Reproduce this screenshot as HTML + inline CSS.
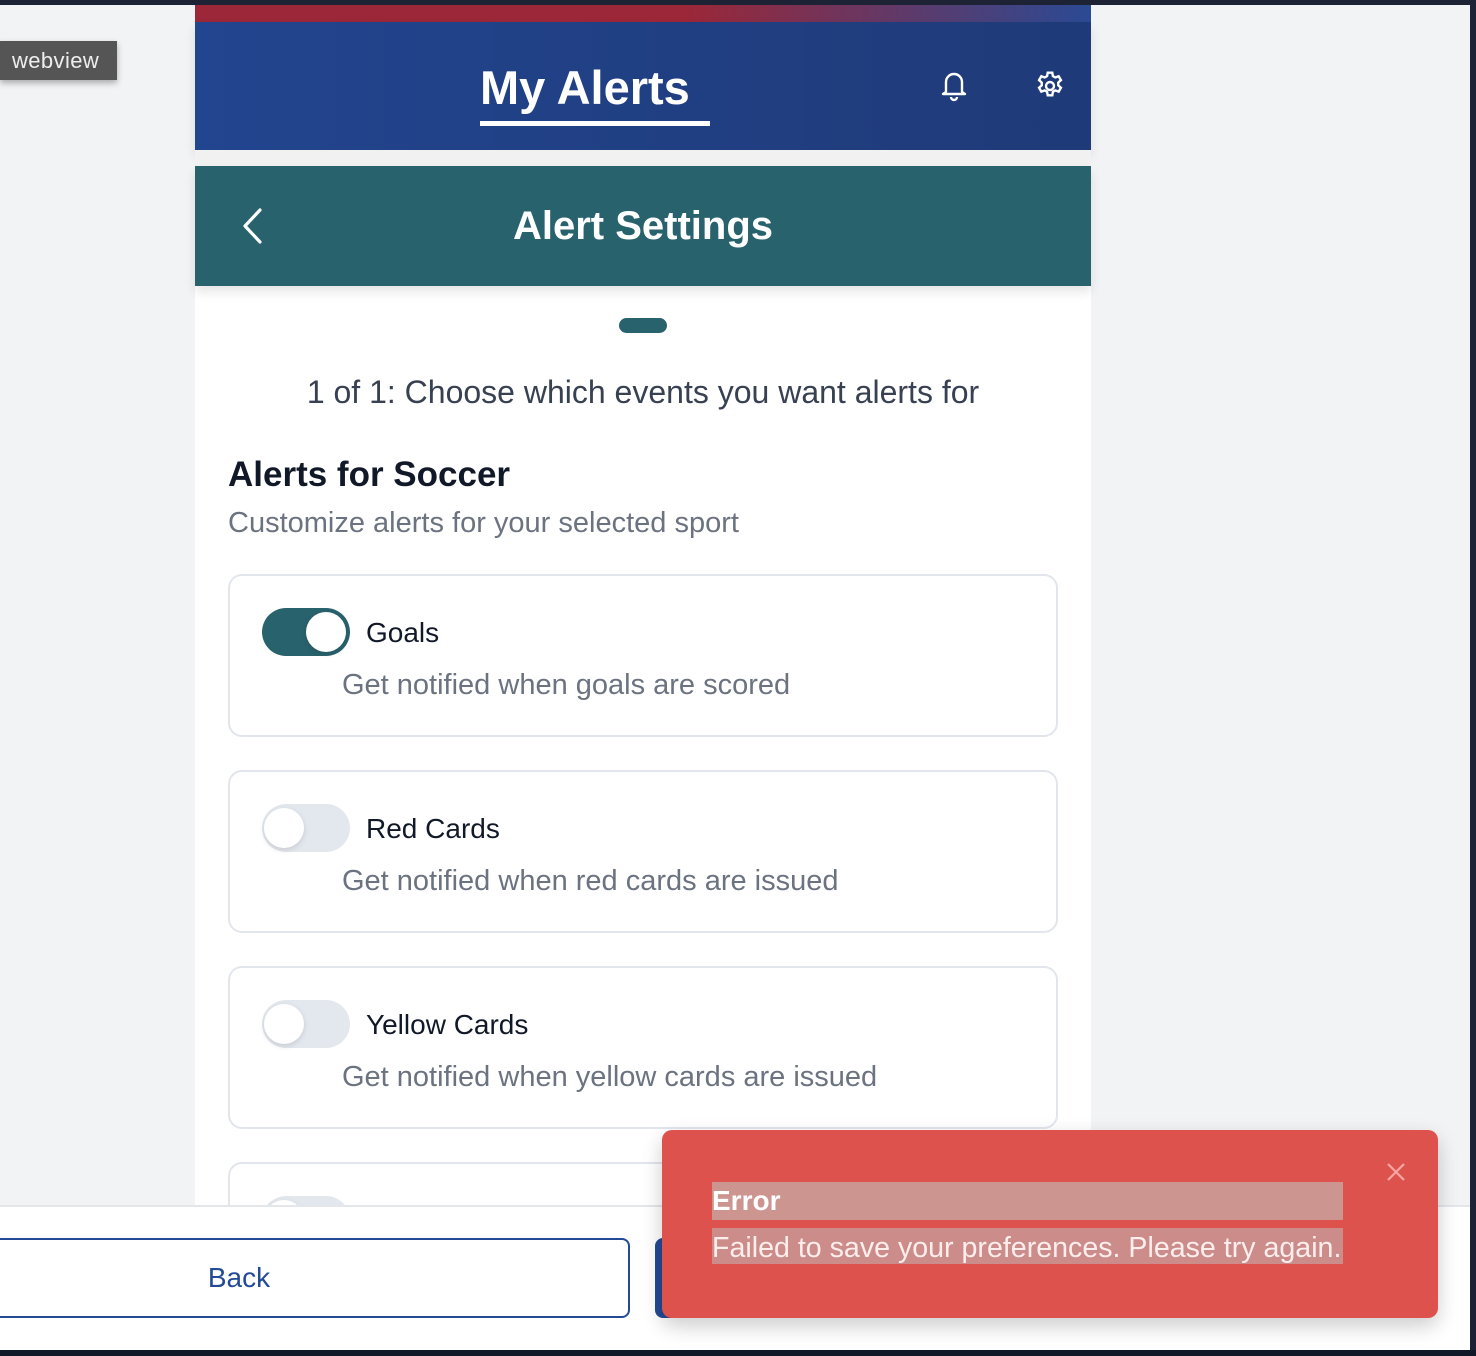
<!DOCTYPE html>
<html><head><meta charset="utf-8"><style>
*{box-sizing:border-box;margin:0;padding:0}
body{width:1476px;height:1356px;background:#f2f3f5;font-family:"Liberation Sans",sans-serif;position:relative;overflow:hidden}
.abs{position:absolute}
.card{position:absolute;left:228px;width:830px;height:163px;border:2px solid #e2e6ec;border-radius:14px;background:#fff}
.tog{position:absolute;left:32px;top:32px;width:88px;height:48px;border-radius:24px;background:#e3e7ee}
.tog .k{position:absolute;top:4px;left:2px;width:40px;height:40px;border-radius:50%;background:#fff;box-shadow:0 2px 6px rgba(0,0,0,.12)}
.tog.on{background:#28626d}.tog.on .k{left:44px}
.tt{position:absolute;left:136px;top:41px;font-size:28px;color:#111827}
.ds{position:absolute;left:112px;top:93px;font-size:29px;color:#6b7280}
</style></head><body>
<div class="abs" style="left:0;top:0;width:1476px;height:5px;background:#1e2235"></div>
<div class="abs" style="right:0;top:0;width:6px;height:1356px;background:#1e2235"></div>
<div class="abs" style="left:0;bottom:0;width:1476px;height:6px;background:#111827"></div>
<div class="abs" style="left:0;top:41px;width:117px;height:39px;background:#555;color:#eee;font-size:22px;line-height:39px;padding-left:12px;letter-spacing:0.4px;box-shadow:0 3px 6px rgba(0,0,0,.3)">webview</div>
<div class="abs" style="left:195px;top:5px;width:896px;height:1200px;background:#fff"></div>
<div class="abs" style="left:195px;top:5px;width:896px;height:17px;background:linear-gradient(90deg,#9b2738 0%,#9b2738 55%,#2b4a94 100%)"></div>
<div class="abs" style="left:195px;top:22px;width:896px;height:128px;background:linear-gradient(90deg,#22458f,#1f3a78);box-shadow:0 6px 10px rgba(0,0,0,.1)"></div>
<div class="abs" style="left:480px;top:60px;font-size:47px;font-weight:bold;color:#fff">My Alerts</div>
<div class="abs" style="left:480px;top:121px;width:230px;height:5px;background:#fff"></div>
<svg class="abs" style="left:938px;top:68px" width="32" height="34" viewBox="0 0 32 34" fill="none" stroke="#fff" stroke-width="2.4" stroke-linejoin="round"><path d="M8 24V14a8 8 0 0 1 16 0v10l3 2H5z"/><path d="M13 29a3 3 0 0 0 6 0"/></svg>
<svg class="abs" style="left:1034px;top:70px" width="32" height="32" viewBox="0 0 24 24" fill="none" stroke="#fff" stroke-width="1.8"><circle cx="12" cy="12" r="3"/><path d="M10.3 2h3.4l.5 2.6 1.8 1 2.5-.9 1.7 2.9-2 1.8v2.1l2 1.8-1.7 2.9-2.5-.9-1.8 1-.5 2.7h-3.4l-.5-2.7-1.8-1-2.5.9-1.7-2.9 2-1.8V9.4l-2-1.8 1.7-2.9 2.5.9 1.8-1z"/></svg>
<div class="abs" style="left:195px;top:150px;width:896px;height:16px;background:#f1f1f1"></div>
<div class="abs" style="left:195px;top:166px;width:896px;height:120px;background:#28626d;box-shadow:0 6px 10px rgba(0,0,0,.1)"></div>
<svg class="abs" style="left:238px;top:206px" width="28" height="40" viewBox="0 0 28 40" fill="none" stroke="#fff" stroke-width="3.2" stroke-linecap="round" stroke-linejoin="round"><path d="M22 4L7 20l15 16"/></svg>
<div class="abs" style="left:195px;width:896px;top:204px;text-align:center;font-size:40px;font-weight:bold;color:#fff">Alert Settings</div>
<div class="abs" style="left:619px;top:318px;width:48px;height:15px;border-radius:8px;background:#28626d"></div>
<div class="abs" style="left:195px;width:896px;top:374px;text-align:center;font-size:32px;color:#374151">1 of 1: Choose which events you want alerts for</div>
<div class="abs" style="left:228px;top:455px;font-size:35px;font-weight:bold;color:#111827">Alerts for Soccer</div>
<div class="abs" style="left:228px;top:507px;font-size:29px;color:#6b7280">Customize alerts for your selected sport</div>
<div class="card" style="top:574px"><div class="tog on"><div class="k"></div></div><div class="tt">Goals</div><div class="ds">Get notified when goals are scored</div></div>
<div class="card" style="top:770px"><div class="tog"><div class="k"></div></div><div class="tt">Red Cards</div><div class="ds">Get notified when red cards are issued</div></div>
<div class="card" style="top:966px"><div class="tog"><div class="k"></div></div><div class="tt">Yellow Cards</div><div class="ds">Get notified when yellow cards are issued</div></div>
<div class="card" style="top:1162px"><div class="tog"><div class="k"></div></div></div>
<div class="abs" style="left:0;top:1205px;width:1470px;height:145px;background:#fff;border-top:2px solid #e3e6eb"></div>
<div class="abs" style="left:-152px;top:1238px;width:782px;height:80px;border:2px solid #234a94;border-radius:8px;background:#fff;text-align:center;line-height:76px;font-size:28px;color:#234a94">Back</div>
<div class="abs" style="left:655px;top:1238px;width:200px;height:80px;border-radius:8px;background:#234a94"></div>
<div class="abs" style="left:662px;top:1130px;width:776px;height:188px;border-radius:10px;background:#dd524d;box-shadow:0 8px 20px rgba(0,0,0,.2)"></div>
<div class="abs" style="left:712px;top:1182px;width:631px;height:38px;background:#cc9590;color:#fff;font-size:28px;font-weight:bold;line-height:38px">Error</div>
<div class="abs" style="left:712px;top:1228px;width:631px;height:36px;background:#cc8d8a;color:#fdeeee;font-size:28.6px;line-height:40px;white-space:nowrap;overflow:hidden">Failed to save your preferences. Please try again.</div>
<svg class="abs" style="left:1386px;top:1162px" width="20" height="20" viewBox="0 0 20 20" stroke="#f6a6a3" stroke-width="2.2"><path d="M2 2l16 16M18 2L2 18"/></svg>
</body></html>
